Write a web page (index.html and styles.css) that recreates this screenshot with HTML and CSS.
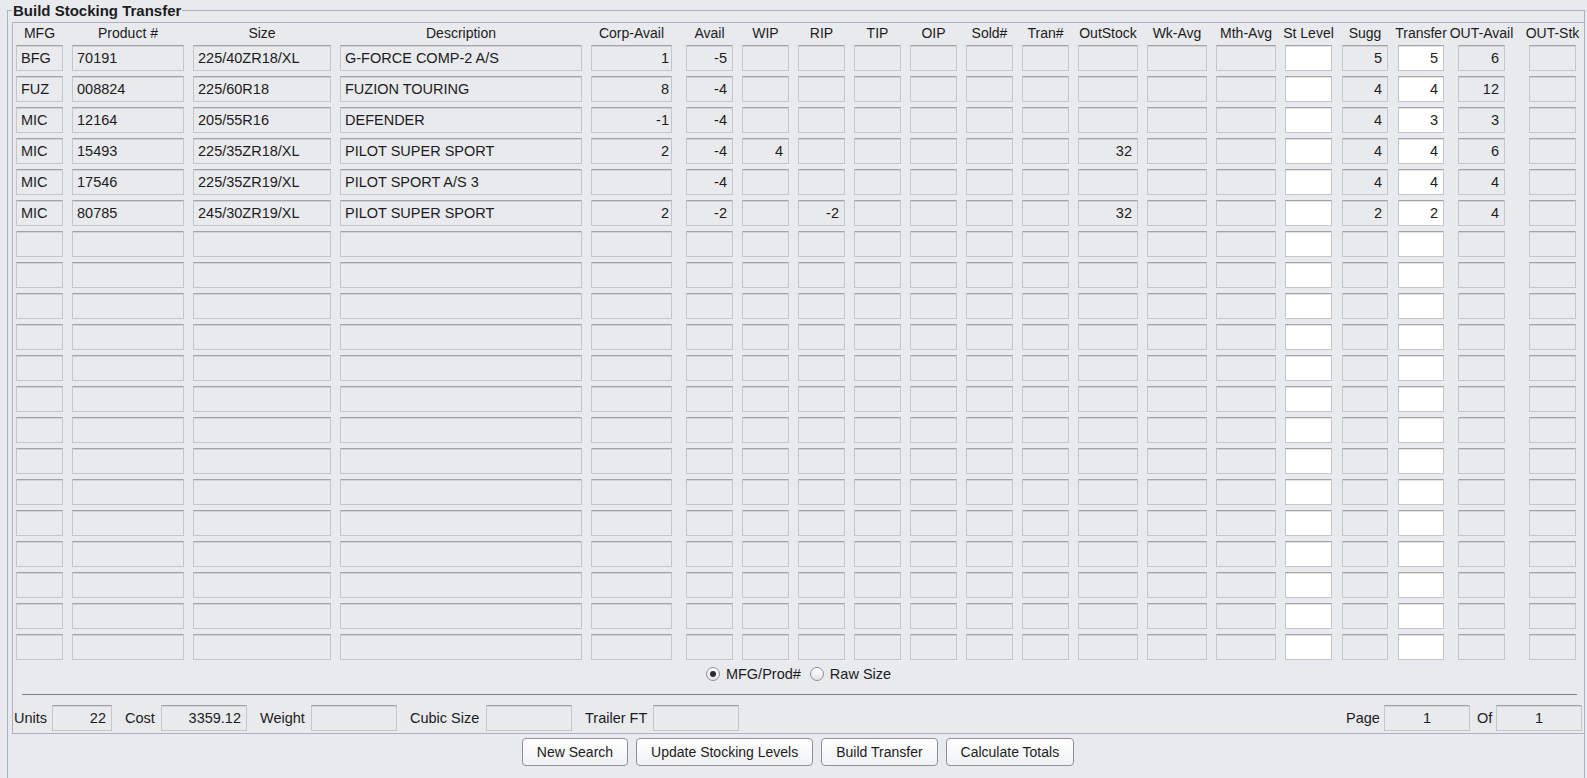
FILE: index.html
```html
<!DOCTYPE html>
<html lang="en">
<head>
  <meta charset="UTF-8">
  <title>Build Stocking Transfer</title>
  <link rel="stylesheet" href="styles.css">
</head>
<body class="body">
  <fieldset class="frame">
    <legend class="frame-title">Build Stocking Transfer</legend>
    <div class="panel">
      <!-- header and rows are built by the script below -->
      <div class="grid-row grid-head" id="grid-head"></div>
      <div class="grid-body" id="grid-body"></div>

      <div class="search-mode">
        <label class="radio"><span class="radio-dot checked"></span>MFG/Prod#</label>
        <label class="radio"><span class="radio-dot"></span>Raw Size</label>
      </div>

      <hr class="separator">

      <div class="totals">
        <span class="t-label l-units">Units</span>
        <span class="field num t-units">22</span>
        <span class="t-label l-cost">Cost</span>
        <span class="field num t-field">3359.12</span>
        <span class="t-label l-weight">Weight</span>
        <span class="field num t-field"></span>
        <span class="t-label l-cubic">Cubic Size</span>
        <span class="field num t-field"></span>
        <span class="t-label l-trailer">Trailer FT</span>
        <span class="field num t-field"></span>

        <span class="t-label l-page">Page</span>
        <span class="field center t-field">1</span>
        <span class="t-label l-of">Of</span>
        <span class="field center t-field">1</span>
      </div>
    </div>

    <div class="actions">
      <button class="btn">New Search</button>
      <button class="btn">Update Stocking Levels</button>
      <button class="btn">Build Transfer</button>
      <button class="btn">Calculate Totals</button>
    </div>
  </fieldset>

  <script>
    // колонки таблицы: ключ, заголовок, класс ширины
    const columns = [
      { key: "mfg", label: "MFG", cls: "c-mfg" },
      { key: "prod", label: "Product #", cls: "c-prod" },
      { key: "size", label: "Size", cls: "c-size" },
      { key: "desc", label: "Description", cls: "c-desc" },
      { key: "corp", label: "Corp-Avail", cls: "c-corp" },
      { key: "avail", label: "Avail", cls: "c-avail" },
      { key: "wip", label: "WIP", cls: "c-wip" },
      { key: "rip", label: "RIP", cls: "c-rip" },
      { key: "tip", label: "TIP", cls: "c-tip" },
      { key: "oip", label: "OIP", cls: "c-oip" },
      { key: "sold", label: "Sold#", cls: "c-sold" },
      { key: "tran", label: "Tran#", cls: "c-tran" },
      { key: "out", label: "OutStock", cls: "c-out" },
      { key: "wk", label: "Wk-Avg", cls: "c-wk" },
      { key: "mth", label: "Mth-Avg", cls: "c-mth" },
      { key: "lvl", label: "St Level", cls: "c-lvl", edit: true },
      { key: "sugg", label: "Sugg", cls: "c-sugg" },
      { key: "xfer", label: "Transfer", cls: "c-xfer", edit: true },
      { key: "oavail", label: "OUT-Avail", cls: "c-oavail" },
      { key: "ostk", label: "OUT-Stk", cls: "c-ostk" }
    ];

    const rows = [
      { mfg: "BFG", prod: "70191", size: "225/40ZR18/XL", desc: "G-FORCE COMP-2 A/S", corp: "1", avail: "-5", sugg: "5", xfer: "5", oavail: "6" },
      { mfg: "FUZ", prod: "008824", size: "225/60R18", desc: "FUZION TOURING", corp: "8", avail: "-4", sugg: "4", xfer: "4", oavail: "12" },
      { mfg: "MIC", prod: "12164", size: "205/55R16", desc: "DEFENDER", corp: "-1", avail: "-4", sugg: "4", xfer: "3", oavail: "3" },
      { mfg: "MIC", prod: "15493", size: "225/35ZR18/XL", desc: "PILOT SUPER SPORT", corp: "2", avail: "-4", wip: "4", out: "32", sugg: "4", xfer: "4", oavail: "6" },
      { mfg: "MIC", prod: "17546", size: "225/35ZR19/XL", desc: "PILOT SPORT A/S 3", avail: "-4", sugg: "4", xfer: "4", oavail: "4" },
      { mfg: "MIC", prod: "80785", size: "245/30ZR19/XL", desc: "PILOT SUPER SPORT", corp: "2", avail: "-2", rip: "-2", out: "32", sugg: "2", xfer: "2", oavail: "4" }
    ];
    const rowCount = 20;

    const head = document.getElementById("grid-head");
    columns.forEach((col) => {
      const th = document.createElement("div");
      th.className = "head-cell " + col.cls;
      th.textContent = col.label;
      head.append(th);
    });

    const body = document.getElementById("grid-body");
    for (let i = 0; i < rowCount; i++) {
      const data = rows[i] || {};
      const row = document.createElement("div");
      row.className = "grid-row";
      columns.forEach((col, index) => {
        const cell = document.createElement("div");
        cell.className = "field " + col.cls;
        if (index > 3) cell.classList.add("num");
        if (col.edit) cell.classList.add("edit");
        cell.textContent = data[col.key] || "";
        row.append(cell);
      });
      body.append(row);
    }
  </script>
</body>
</html>
```

FILE: styles.css
```css
.body {
  margin: 0;
  height: 778px;
  overflow: hidden;
  background-color: #E9EAEE;
  color: #1C1C22;
  font-family: "Liberation Sans", Arial, sans-serif;
  font-size: 14.5px;
}
.frame {
  box-sizing: border-box;
  height: 777px;
  margin: 1px 2px 0 7px;
  padding: 2px 0 0 4px;
  min-width: 0;
  border: 1px solid #A9B2C3;
  border-bottom: none;
}
.frame-title {
  padding: 0 1px;
  font-size: 15px;
  font-weight: 700;
  line-height: 19px;
  color: #1C1C22;
}
.panel {
  border: 1px solid #AAB3C3;
  border-right: none;
  padding-bottom: 2px;
}
.grid-row {
  display: flex;
  padding-left: 3px;
}
.grid-head {
  height: 20px;
  margin-bottom: 2px;
}
.grid-body {
  display: flex;
  flex-direction: column;
  gap: 5px;
}
.head-cell {
  flex-shrink: 0;
  display: flex;
  justify-content: center;
  font-size: 14px;
  line-height: 20px;
  white-space: nowrap;
}
.field {
  flex-shrink: 0;
  box-sizing: border-box;
  height: 26px;
  padding: 0 4px;
  border: 1px solid #C5C6CA;
  border-top-color: #A2A3A7;
  box-shadow: inset 0 1px 0 #D2D3D7;
  background-color: #E9EAEE;
  line-height: 24px;
  white-space: nowrap;
  overflow: hidden;
}
.field.num {
  text-align: right;
  padding-right: 5px;
}
.field.center {
  text-align: center;
}
.field.edit {
  background-color: #FFFFFF;
  box-shadow: inset 0 1px 0 #E4E4E4;
}

/* column widths */
.c-mfg { width: 47px; }
.c-prod { width: 112px; margin-left: 9px; }
.c-size { width: 138px; margin-left: 9px; }
.c-desc { width: 242px; margin-left: 9px; }
.c-corp { width: 81px; margin-left: 9px; }
.field.c-corp { padding-right: 2px; }
.c-avail { width: 47px; margin-left: 14px; }
.c-wip,
.c-rip,
.c-tip,
.c-oip,
.c-sold,
.c-tran,
.c-lvl { width: 47px; margin-left: 9px; }
.c-out,
.c-wk,
.c-mth { width: 60px; margin-left: 9px; }
.c-sugg,
.c-xfer { width: 46px; margin-left: 10px; }
.c-oavail { width: 47px; margin-left: 14px; }
.c-ostk { width: 47px; margin-left: 24px; }

.search-mode {
  display: flex;
  justify-content: center;
  align-items: center;
  gap: 9px;
  height: 20px;
  margin-top: 4px;
}
.radio {
  display: flex;
  align-items: center;
  gap: 6px;
}
.radio-dot {
  box-sizing: border-box;
  width: 14px;
  height: 14px;
  border: 1px solid #8C8E93;
  border-radius: 50%;
  background: linear-gradient(#FFFFFF, #E2E3E7);
  display: flex;
  align-items: center;
  justify-content: center;
}
.radio-dot.checked::after {
  content: "";
  width: 6px;
  height: 6px;
  border-radius: 50%;
  background-color: #2A2A30;
}
.separator {
  margin: 10px 7px 0 9px;
  border: none;
  border-top: 1px solid #7E7F83;
  height: 0;
}
.totals {
  display: flex;
  align-items: center;
  margin-top: 10px;
  padding: 0 2px 0 1px;
}
.t-label {
  flex-shrink: 0;
  margin-left: 13px;
  white-space: nowrap;
}
.l-units { width: 38px; margin-left: 0; }
.l-cost { width: 36px; }
.l-weight { width: 51px; }
.l-cubic { width: 76px; }
.l-trailer { width: 68px; }
.l-page { width: 38px; margin-left: auto; }
.l-of { width: 19px; margin-left: 7px; }
.t-units {
  width: 60px;
}
.t-field {
  width: 86px;
}
.actions {
  display: flex;
  justify-content: center;
  gap: 8px;
  margin-top: 4px;
}
.btn {
  height: 28px;
  padding: 0 14px;
  border: 1px solid #8F9196;
  border-radius: 4px;
  background: linear-gradient(#FFFFFF, #F0F1F3);
  font-family: "Liberation Sans", Arial, sans-serif;
  font-size: 14px;
  color: #1C1C22;
  cursor: pointer;
}
```
